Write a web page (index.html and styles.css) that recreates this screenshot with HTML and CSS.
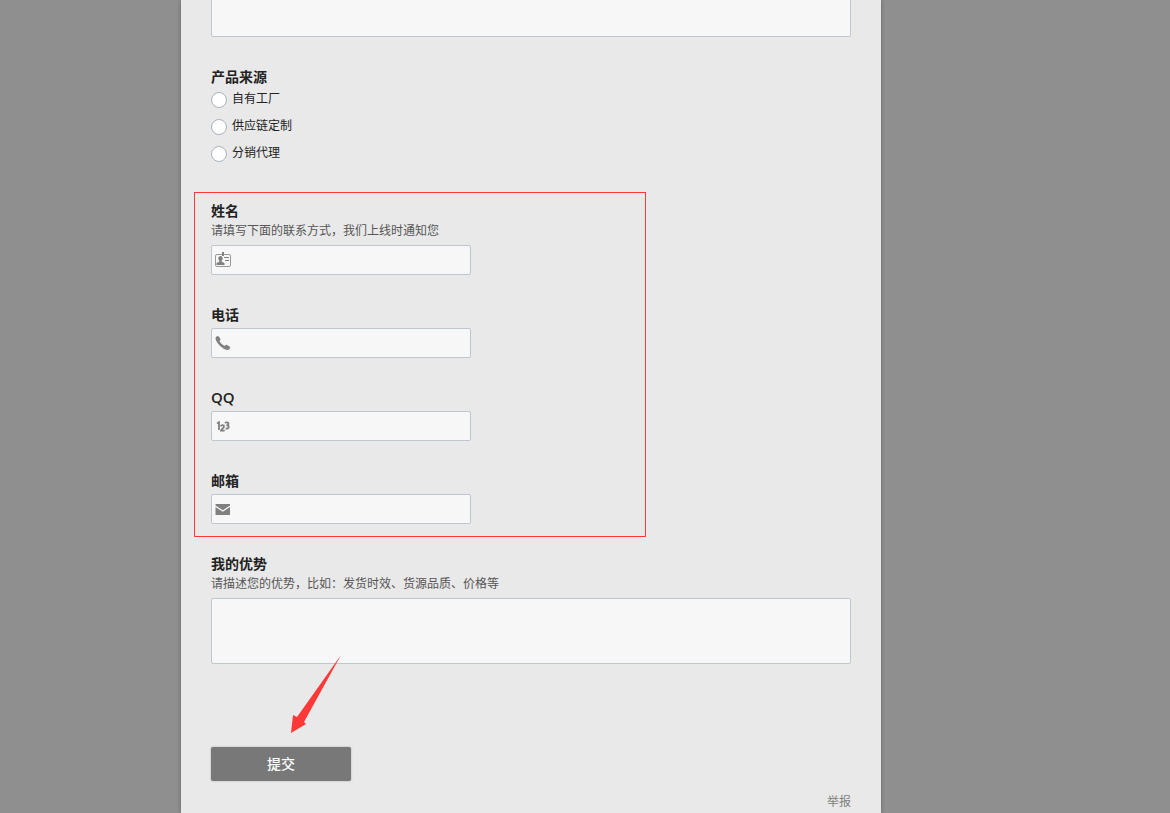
FILE: index.html
```html
<!DOCTYPE html>
<html lang="zh-CN">
<head>
    <meta charset="UTF-8">
    <title>产品来源</title>
    <link rel="stylesheet" href="styles.css">
</head>
<body>
    <form class="form">
        <div class="field">
            <textarea class="area" aria-label="产品"></textarea>
        </div>
        <fieldset class="field">
            <legend class="title">产品来源</legend>
            <div class="options">
                <label class="option"><input type="radio" name="source"><span>自有工厂</span></label>
                <label class="option"><input type="radio" name="source"><span>供应链定制</span></label>
                <label class="option"><input type="radio" name="source"><span>分销代理</span></label>
            </div>
        </fieldset>
        <div class="contact">
            <div class="field">
                <label class="title" for="name">姓名</label>
                <p class="desc">请填写下面的联系方式，我们上线时通知您</p>
                <div class="inputbox">
                    <svg class="icon" viewBox="0 0 16 16" aria-hidden="true">
                        <rect x="0.5" y="2.5" width="15" height="12" rx="1.5" fill="none" stroke="#999"/>
                        <path fill="#808080" d="M7 0h2v4H7zM5.500 4c1.400 0 2.200 1 2.200 2.300 0 1-.4 1.900-1 2.400v1l2.800 1.300v2H1.500v-2l2.800-1.300v-1c-.6-.5-1-1.400-1-2.400C3.300 5 4.100 4 5.500 4z"/>
                        <path stroke="#808080" d="M9 5.500h5M10 8.500h4"/>
                    </svg>
                    <input type="text" id="name">
                </div>
            </div>
            <div class="field">
                <label class="title" for="tel">电话</label>
                <div class="inputbox">
                    <svg class="icon" viewBox="0 0 16 16" aria-hidden="true">
                        <path fill="#808080" d="M.5 3.300C.4 2.300 1.800 1 3 1c.6 0 2.700 2.900 2.600 3.500-.1.700-1 1-1 1.500 0 1 3.700 4.600 4.900 4.800.7.100 1.100-1 1.700-1.100.6-.1 3.900 1.900 4 2.500.1 1-1.400 2.600-2.800 2.700C8.500 15.200.6 7.800.5 3.300z"/>
                    </svg>
                    <input type="tel" id="tel">
                </div>
            </div>
            <div class="field">
                <label class="title latin" for="qq">QQ</label>
                <div class="inputbox">
                    <svg class="icon" viewBox="0 0 16 16" aria-hidden="true">
                        <g fill="none" stroke="#808080" stroke-width="1.800">
                            <path d="M2 5.600l2-1.200V12"/>
                            <path d="M5.800 8.400c.3-1.600 3.200-1.600 3.200.2 0 1.500-2.600 2.500-3 4.100h3.700"/>
                            <path d="M10 5c1.200-1.200 3.600-.8 3.500.8 0 1-.8 1.500-2 1.500 3.200 0 3 4-.9 3.200"/>
                        </g>
                    </svg>
                    <input type="text" id="qq">
                </div>
            </div>
            <div class="field">
                <label class="title" for="mail">邮箱</label>
                <div class="inputbox">
                    <svg class="icon" viewBox="0 0 16 16" aria-hidden="true">
                        <path fill="#808080" d="M.5 3h14.500v1.500L7.800 9.300.5 4.500zM.5 6l7.300 4.800L15 6v8H.5z"/>
                    </svg>
                    <input type="email" id="mail">
                </div>
            </div>
        </div>
        <div class="field">
            <label class="title" for="advantage">我的优势</label>
            <p class="desc">请描述您的优势，比如：发货时效、货源品质、价格等</p>
            <textarea class="area" id="advantage"></textarea>
        </div>
        <div class="actions">
            <svg class="arrow" viewBox="0 0 50 78" aria-hidden="true">
                <path fill="#ff3838" d="M50 0L13 67l2 2L0 78 2 60l4 2z"/>
            </svg>
            <button type="submit" class="submit">提交</button>
        </div>
        <div class="foot"><a class="report" href="#">举报</a></div>
    </form>
</body>
</html>
```
FILE: styles.css
```css
* { margin: 0; padding: 0; box-sizing: border-box; }
body {
    background-color: #8f8f8f;
    padding-right: 108px;
    font-family: "Noto Sans CJK SC", sans-serif;
    font-size: 12px;
    color: #222;
}
.form {
    max-width: 700px;
    min-height: 100vh;
    margin: 0 auto;
    padding: 0 30px;
    background-color: #e9e9e9;
    box-shadow: 0 0 4px rgba(0, 0, 0, 0.3);
    overflow: hidden;
}
.field {
    border: none;
    margin-bottom: 30px;
}
.title {
    display: block;
    font-size: 14px;
    line-height: 18px;
    padding-bottom: 2px;
    font-weight: bold;
}
.latin {
    font-family: "Open Sans", sans-serif;
    font-size: 15px;
    font-weight: 600;
}
.desc {
    line-height: 18px;
    padding-bottom: 3px;
    color: #555;
}
.area, .inputbox {
    border: 1px solid #c0c6d0;
    border-radius: 2px;
    background-color: #f7f7f7;
}
.area {
    display: block;
    width: 100%;
    height: 66px;
    margin-top: 3px;
    resize: none;
}
.form > .field:first-child {
    margin-top: -32px;
}
.options {
    padding-top: 3px;
}
.option {
    display: flex;
    align-items: flex-start;
    gap: 5px;
    height: 27px;
    line-height: 16px;
}
.option input {
    appearance: none;
    width: 16px;
    height: 16px;
    margin-top: 2px;
    border: 1px solid #a9b2bd;
    border-radius: 50%;
    background-color: #fff;
}
.contact {
    position: relative;
}
/* red frame round the contact fields */
.contact::after {
    content: "";
    position: absolute;
    top: -9px;
    bottom: -13px;
    left: -17px;
    width: 452px;
    box-sizing: border-box;
    border: 1px solid #ff3838;
    pointer-events: none;
}
.inputbox {
    display: flex;
    align-items: center;
    width: 260px;
    height: 30px;
    margin-top: 3px;
    padding-left: 3px;
}
.inputbox input {
    flex: 1;
    min-width: 0;
    height: 28px;
    padding: 0 4px;
    border: none;
    background: none;
    outline: none;
}
.icon {
    width: 16px;
    height: 16px;
}
.actions {
    position: relative;
    padding-top: 53px;
}
.arrow {
    position: absolute;
    left: 80px;
    top: -39px;
    width: 50px;
    height: 78px;
}
.submit {
    display: block;
    width: 140px;
    height: 34px;
    padding-bottom: 2px;
    border: none;
    border-radius: 2px;
    background-color: #787878;
    box-shadow: 0 0 2px rgba(0, 0, 0, 0.3);
    color: #fff;
    font-family: inherit;
    font-size: 14px;
    font-weight: 500;
    cursor: pointer;
}
.foot {
    padding-top: 12px;
    text-align: right;
    line-height: 16px;
}
.report {
    color: #808080;
    text-decoration: none;
}
```
